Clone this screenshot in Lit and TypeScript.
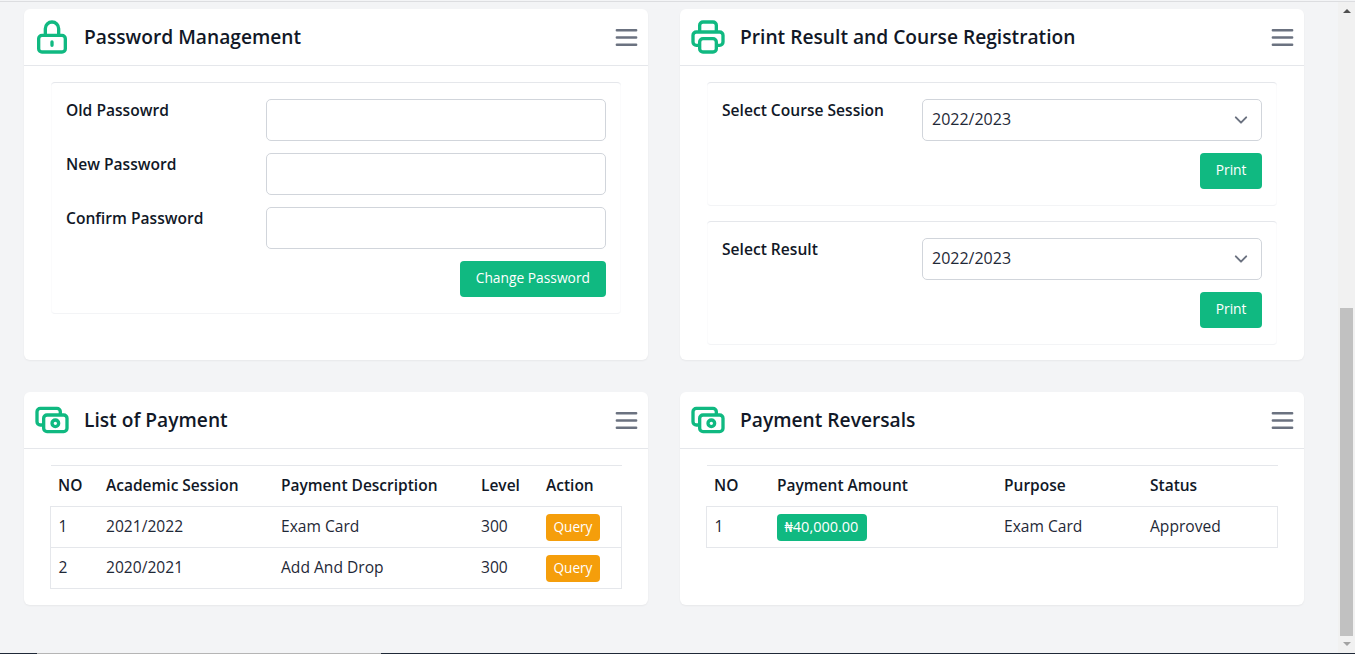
import { LitElement, html, css, svg } from 'lit';
import { customElement } from 'lit/decorators.js';

const ICONS = {
  lock: 'M12 15v2m-6 4h12a2 2 0 002-2v-6a2 2 0 00-2-2H6a2 2 0 00-2 2v6a2 2 0 002 2zm10-10V7a4 4 0 00-8 0v4h8z',
  printer: 'M17 17h2a2 2 0 002-2v-4a2 2 0 00-2-2H5a2 2 0 00-2 2v4a2 2 0 002 2h2m2 4h6a2 2 0 002-2v-4a2 2 0 00-2-2H9a2 2 0 00-2 2v4a2 2 0 002 2zm8-12V5a2 2 0 00-2-2H9a2 2 0 00-2 2v4h10z',
  cash: 'M17 9V7a2 2 0 00-2-2H5a2 2 0 00-2 2v6a2 2 0 002 2h2m2 4h10a2 2 0 002-2v-6a2 2 0 00-2-2H9a2 2 0 00-2 2v6a2 2 0 002 2zm7-5a2 2 0 11-4 0 2 2 0 014 0z',
  menu: 'M4 6h16M4 12h16M4 18h16',
};

const CHEVRON =
  "url(\"data:image/svg+xml,%3csvg xmlns='http://www.w3.org/2000/svg' fill='none' viewBox='0 0 20 20'%3e%3cpath stroke='%236b7280' stroke-linecap='round' stroke-linejoin='round' stroke-width='1.5' d='M6 8l4 4 4-4'/%3e%3c/svg%3e\")";

const icon = (d: string, cls: string) => html`<svg class=${cls} viewBox="0 0 24 24" fill="none" stroke="currentColor" stroke-width="2" stroke-linecap="round" stroke-linejoin="round">${svg`<path d=${d}></path>`}</svg>`;

@customElement('app-root')
export class AppRoot extends LitElement {
  static styles = css`
    :host {
      display: flex;
      flex-direction: column;
      width: 1355px;
      height: 654px;
      overflow: hidden;
      background: #f3f4f6;
      font-family: 'Open Sans', 'Noto Sans', sans-serif;
      color: #111827;
    }

    .top-line {
      height: 1px;
      margin-top: 1px;
      background: #dcdde0;
      flex: none;
    }

    .body {
      flex: 1;
      display: flex;
      min-height: 0;
    }

    .main {
      flex: 1;
      display: grid;
      grid-template-columns: 624px 624px;
      grid-template-rows: 351px 213px;
      gap: 32px;
      padding: 7px 0 0 24px;
      align-content: start;
    }

    .card {
      background: #fff;
      border-radius: 6px;
      box-shadow: 0 1px 2px rgba(0, 0, 0, 0.05);
      display: flex;
      flex-direction: column;
    }

    .card-head {
      height: 56px;
      flex: none;
      display: flex;
      align-items: center;
      padding: 0 7px 0 8px;
      border-bottom: 1px solid #e5e7eb;
    }

    .head-icon {
      width: 40px;
      height: 40px;
      color: #10b981;
      flex: none;
    }

    .title {
      margin: 0 0 1px 12px;
      flex: 1;
      font-size: 19.2px;
      font-weight: 600;
      line-height: 28px;
    }

    .menu-icon {
      width: 29px;
      height: 29px;
      color: #6b7280;
      flex: none;
    }

    .card-body {
      padding: 16px 27px 16px;
      display: flex;
      flex-direction: column;
      gap: 15px;
    }

    .block {
      border-top: 1px solid #e5e7eb;
      border-bottom: 1px solid #f3f4f6;
      border-radius: 4px;
      box-shadow: inset 1px 0 #fbfbfc, inset -1px 0 #fbfbfc;
      padding: 16px 15px 16px;
      display: flex;
      flex-direction: column;
      gap: 12px;
    }

    .row {
      display: flex;
      align-items: flex-start;
    }

    .row label {
      width: 200px;
      flex: none;
      font-size: 15.6px;
      font-weight: 600;
      line-height: 23px;
      white-space: nowrap;
    }

    .field {
      flex: 1;
      height: 42px;
      box-sizing: border-box;
      border: 1px solid #d1d5db;
      border-radius: 5px;
      background-color: #fff;
      padding: 0 9px;
      font: inherit;
      font-size: 16px;
      color: #1f2937;
      min-width: 0;
    }

    select.field {
      appearance: none;
      -webkit-appearance: none;
      padding-bottom: 2px;
      background-repeat: no-repeat;
      background-position: right 7px center;
      background-size: 26px 26px;
    }

    .actions {
      display: flex;
      justify-content: flex-end;
    }

    .btn {
      height: 36px;
      border: 0;
      border-radius: 4px;
      background: #10b981;
      color: #fff;
      font: inherit;
      font-size: 13.8px;
      font-weight: 500;
      padding: 0 16px 4px;
    }

    .btn.print {
      padding: 0 15.5px 4px;
    }

    table {
      border-collapse: collapse;
      table-layout: fixed;
      width: 572px;
      margin: 0 -1px;
      font-size: 15.6px;
      color: #1f2937;
    }

    th {
      height: 38px;
      padding: 0 8px 2px 7.5px;
      text-align: left;
      font-size: 15.5px;
      font-weight: 600;
      color: #111827;
      border-top: 1px solid #e5e7eb;
      white-space: nowrap;
    }

    td {
      height: 38px;
      padding: 0 8px 2px 7.5px;
      border-top: 1px solid #e5e7eb;
      border-bottom: 1px solid #e5e7eb;
      white-space: nowrap;
    }

    td.has-badge {
      height: 40px;
      padding: 0 8px 0 7px;
    }

    td:first-child {
      border-left: 1px solid #e5e7eb;
    }

    td:last-child {
      border-right: 1px solid #e5e7eb;
    }

    .badge {
      display: inline-block;
      height: 27px;
      line-height: 26px;
      padding: 0 8px;
      border-radius: 4px;
      color: #fff;
      vertical-align: middle;
    }

    .amber {
      background: #f59e0b;
      font-size: 13.6px;
    }

    .green {
      background: #10b981;
      font-size: 14.5px;
      padding-right: 9px;
    }

    .scrollbar {
      width: 17px;
      flex: none;
      background: #f1f1f1;
      display: flex;
      flex-direction: column;
      align-items: center;
      box-sizing: border-box;
      padding: 0 2px;
    }

    .arrow-up {
      margin-top: 7px;
      border: 4px solid transparent;
      border-top: 0;
      border-bottom: 4px solid #505050;
    }

    .thumb {
      width: 13px;
      height: 328px;
      margin-top: 295px;
      background: #c1c1c1;
      flex: none;
    }

    .arrow-down {
      margin-top: 6px;
      border: 4px solid transparent;
      border-bottom: 0;
      border-top: 4px solid #a3a3a3;
    }

    .bottom-line {
      height: 1px;
      flex: none;
      display: flex;
      background: #1f2937;
    }

    .bottom-line span {
      margin-left: 37px;
      width: 344px;
      background: #b5b5b5;
    }
  `;

  private head(d: string, title: string) {
    return html`
      <div class="card-head">
        ${icon(d, 'head-icon')}
        <h2 class="title">${title}</h2>
        ${icon(ICONS.menu, 'menu-icon')}
      </div>
    `;
  }

  private selectBlock(label: string) {
    return html`
      <div class="block">
        <div class="row">
          <label>${label}</label>
          <select class="field" style="background-image:${CHEVRON}"><option>2022/2023</option></select>
        </div>
        <div class="actions"><button class="btn print">Print</button></div>
      </div>
    `;
  }

  render() {
    return html`
      <div class="top-line"></div>
      <div class="body">
        <div class="main">
          <section class="card">
            ${this.head(ICONS.lock, 'Password Management')}
            <div class="card-body">
              <div class="block">
                ${['Old Passowrd', 'New Password', 'Confirm Password'].map(
                  (l) => html`<div class="row"><label>${l}</label><input class="field" /></div>`,
                )}
                <div class="actions"><button class="btn">Change Password</button></div>
              </div>
            </div>
          </section>

          <section class="card">
            ${this.head(ICONS.printer, 'Print Result and Course Registration')}
            <div class="card-body">
              ${this.selectBlock('Select Course Session')}
              ${this.selectBlock('Select Result')}
            </div>
          </section>

          <section class="card">
            ${this.head(ICONS.cash, 'List of Payment')}
            <div class="card-body">
              <table>
                <colgroup>
                  <col style="width:48px" /><col style="width:175px" /><col style="width:200px" /><col style="width:65px" /><col />
                </colgroup>
                <thead>
                  <tr><th>NO</th><th>Academic Session</th><th>Payment Description</th><th>Level</th><th>Action</th></tr>
                </thead>
                <tbody>
                  <tr><td>1</td><td>2021/2022</td><td>Exam Card</td><td>300</td><td class="has-badge"><span class="badge amber">Query</span></td></tr>
                  <tr><td>2</td><td>2020/2021</td><td>Add And Drop</td><td>300</td><td class="has-badge"><span class="badge amber">Query</span></td></tr>
                </tbody>
              </table>
            </div>
          </section>

          <section class="card">
            ${this.head(ICONS.cash, 'Payment Reversals')}
            <div class="card-body">
              <table>
                <colgroup>
                  <col style="width:63px" /><col style="width:227px" /><col style="width:146px" /><col />
                </colgroup>
                <thead>
                  <tr><th>NO</th><th>Payment Amount</th><th>Purpose</th><th>Status</th></tr>
                </thead>
                <tbody>
                  <tr><td>1</td><td class="has-badge"><span class="badge green">₦40,000.00</span></td><td>Exam Card</td><td>Approved</td></tr>
                </tbody>
              </table>
            </div>
          </section>
        </div>
        <div class="scrollbar">
          <div class="arrow-up"></div>
          <div class="thumb"></div>
          <div class="arrow-down"></div>
        </div>
      </div>
      <div class="bottom-line"><span></span></div>
    `;
  }
}
